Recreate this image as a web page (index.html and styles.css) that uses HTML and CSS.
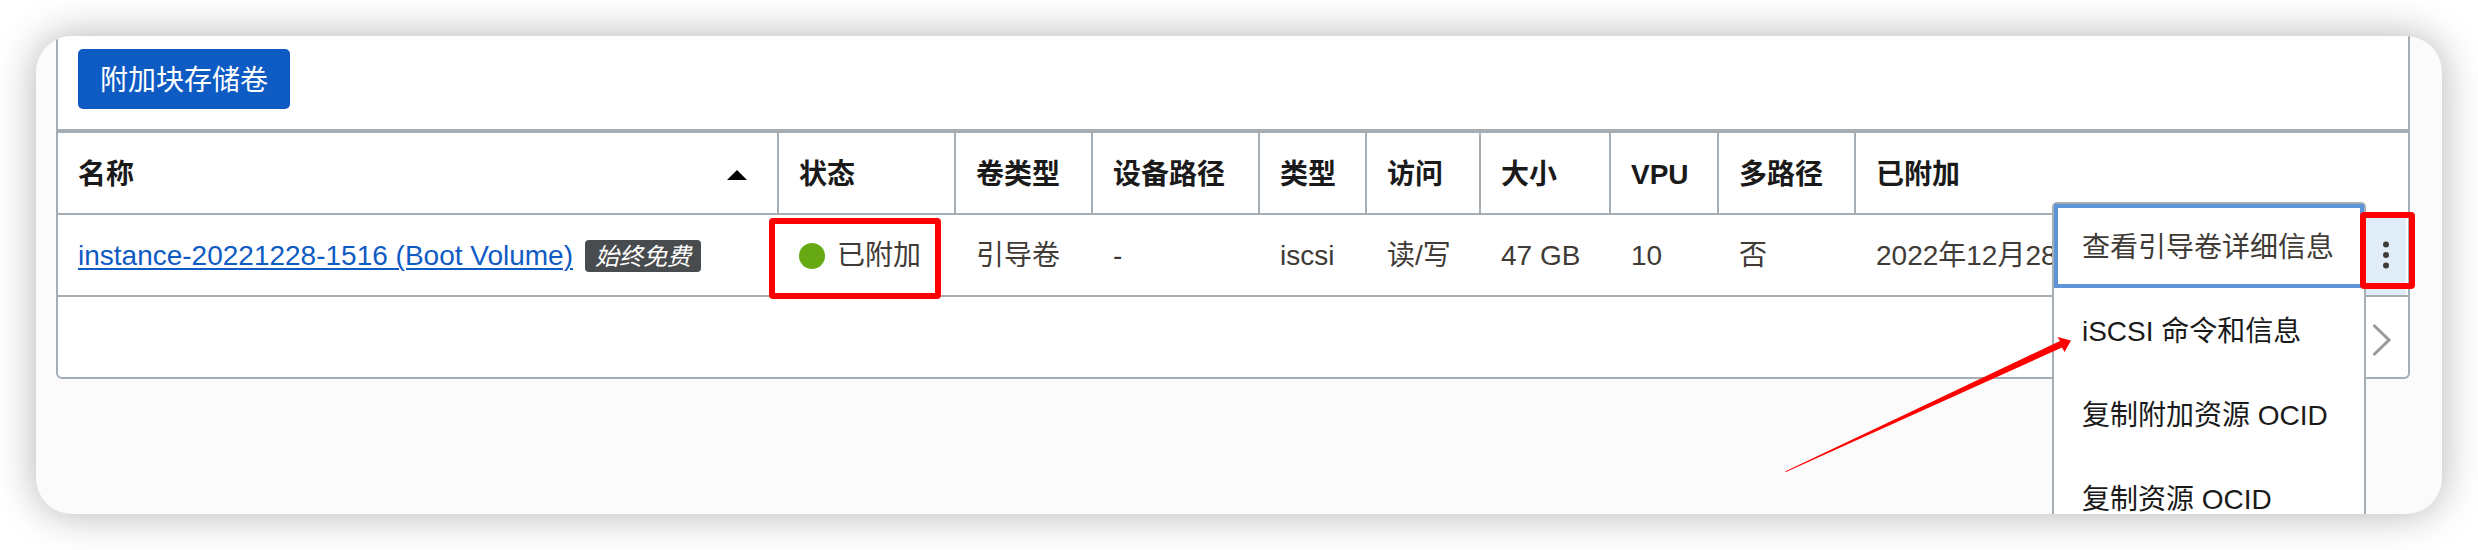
FILE: index.html
```html
<!DOCTYPE html>
<html lang="zh-CN">
<head>
<meta charset="utf-8">
<title>附加的块存储卷</title>
<link rel="stylesheet" href="styles.css">
</head>
<body>
<main class="card">
  <section class="panel">
    <div class="toolbar">
      <button class="primary" type="button">附加块存储卷</button>
    </div>
    <table class="volumes">
      <colgroup>
        <col class="col-name"><col class="col-status"><col class="col-kind"><col class="col-path"><col class="col-type"><col class="col-access"><col class="col-size"><col class="col-vpu"><col class="col-multi"><col class="col-date"><col class="col-action">
      </colgroup>
      <thead>
        <tr>
          <th scope="col"><div class="sortable">名称<svg class="sort" viewBox="0 0 20 10" aria-hidden="true"><path d="M0 10 10 0l10 10z"/></svg></div></th>
          <th scope="col">状态</th>
          <th scope="col">卷类型</th>
          <th scope="col">设备路径</th>
          <th scope="col">类型</th>
          <th scope="col">访问</th>
          <th scope="col">大小</th>
          <th scope="col">VPU</th>
          <th scope="col">多路径</th>
          <th scope="col" colspan="2">已附加</th>
        </tr>
      </thead>
      <tbody>
        <tr>
          <td><div class="name"><a class="link" href="#">instance-20221228-1516 (Boot Volume)</a><em class="badge">始终免费</em></div></td>
          <td class="anchor"><div class="status"><span class="dot"></span>已附加</div><span class="mark mark-status"></span></td>
          <td>引导卷</td>
          <td>-</td>
          <td>iscsi</td>
          <td>读/写</td>
          <td>47 GB</td>
          <td>10</td>
          <td>否</td>
          <td>2022年12月28日</td>
          <td class="anchor action">
            <button class="kebab" type="button" aria-label="操作">
              <svg class="dots" viewBox="0 0 6 28" aria-hidden="true"><circle cx="3" cy="3.500" r="3"/><circle cx="3" cy="14" r="3"/><circle cx="3" cy="24.500" r="3"/></svg>
            </button>
            <div class="menu">
              <button class="item focused" type="button">查看引导卷详细信息</button>
              <button class="item" type="button">iSCSI 命令和信息</button>
              <button class="item" type="button">复制附加资源 OCID</button>
              <button class="item" type="button">复制资源 OCID</button>
              <svg class="arrow" viewBox="0 0 288 138" aria-hidden="true"><path d="M0 135.500 275 5 272.500 1 286 4.500 279.500 16 277 11.500 1 136z"/></svg>
            </div>
            <span class="mark mark-action"></span>
          </td>
        </tr>
      </tbody>
    </table>
    <div class="pager">
      <button class="next" type="button" aria-label="下一页">
        <svg class="chevron" viewBox="0 0 20 34" aria-hidden="true"><path d="M1.500 2 17 17 1.500 32"/></svg>
      </button>
    </div>
  </section>
</main>
</body>
</html>
```
FILE: styles.css
```css
* { box-sizing: border-box; }

body {
  margin: 0;
  padding: 36px;
  background: #fff;
  color: #403b36;
  font: 28px/40px "Liberation Sans", "Noto Sans CJK SC", sans-serif;
}

button {
  border: 0;
  padding: 0;
  background: none;
  color: inherit;
  font: inherit;
}

.card {
  height: calc(100vh - 72px);
  padding: 0 32px 0 20px;
  overflow: hidden;
  border-radius: 36px;
  background: #fbfbfb;
  box-shadow: 0 0 40px rgba(0, 0, 0, 0.3);
}

.panel {
  border: 2px solid #a5adb5;
  border-top: 0;
  border-radius: 0 0 6px 6px;
  background: #fff;
}

.toolbar {
  padding: 13px 20px 20px;
  border-bottom: 4px solid #a5adb5;
  display: flex;
}

.primary {
  height: 60px;
  padding: 4px 22px 0;
  border-radius: 5px;
  background: #0f5bc4;
  color: #fff;
}

.volumes {
  width: 100%;
  table-layout: fixed;
  border-collapse: separate;
  border-spacing: 0;
}

.col-status { width: 177px; }
.col-kind { width: 137px; }
.col-path { width: 167px; }
.col-type { width: 107px; }
.col-access { width: 114px; }
.col-size { width: 130px; }
.col-vpu { width: 108px; }
.col-multi { width: 137px; }
.col-date { width: 510px; }
.col-action { width: 42px; }

th, td {
  height: 82px;
  padding: 4px 0 0 20px;
  border-bottom: 2px solid #a5adb5;
  text-align: left;
  white-space: nowrap;
}

th {
  border-right: 2px solid #a5adb5;
  color: #1a1a1a;
  font-weight: bold;
}

td { padding-top: 2px; }

th:last-child { border-right: 0; }

.sortable {
  display: flex;
  align-items: center;
  justify-content: space-between;
  padding-right: 30px;
}

.sort { width: 20px; height: 10px; }

.name, .status { display: flex; align-items: center; }

.link {
  color: #0f5bc4;
  text-decoration: underline;
  text-decoration-thickness: 2px;
  text-underline-offset: 3px;
}

.badge {
  margin-left: 12px;
  padding: 2px 10px 0;
  border-radius: 4px;
  background: #494c4e;
  color: #fff;
  font-size: 24px;
  line-height: 30px;
}

.dot {
  width: 26px;
  height: 26px;
  margin-right: 12px;
  border-radius: 50%;
  background: #66a913;
}

.anchor { position: relative; }
.action { padding: 0 2px 0 0; }

.kebab {
  display: flex;
  align-items: center;
  justify-content: center;
  width: 100%;
  height: 80px;
  background: #e0edf8;
}

.dots { width: 6px; height: 28px; fill: #403b36; }

.menu {
  position: absolute;
  top: -13px;
  right: 100%;
  border: 2px solid #a5adb5;
  border-radius: 5px;
  background: #fff;
}

.item {
  display: block;
  width: 100%;
  height: 84px;
  padding: 4px 30px 0 28px;
  color: #1a1a1a;
  text-align: left;
}

.focused {
  box-shadow: inset 0 0 0 4px #6094d9;
  color: #403b36;
}

.arrow {
  position: absolute;
  top: 132px;
  left: -269px;
  width: 288px;
  height: 138px;
  fill: #f00;
}

.mark {
  position: absolute;
  border: 6px solid #f00;
  border-radius: 4px;
}

.mark-status { top: 3px; left: -10px; width: 172px; height: 81px; }
.mark-action { top: -3px; left: -6px; width: 55px; height: 77px; }

.pager {
  display: flex;
  align-items: center;
  justify-content: flex-end;
  height: 80px;
  padding-right: 16px;
}

.next { display: flex; padding-top: 6px; }

.chevron {
  width: 20px;
  height: 34px;
  fill: none;
  stroke: #999;
  stroke-width: 3;
}
```
